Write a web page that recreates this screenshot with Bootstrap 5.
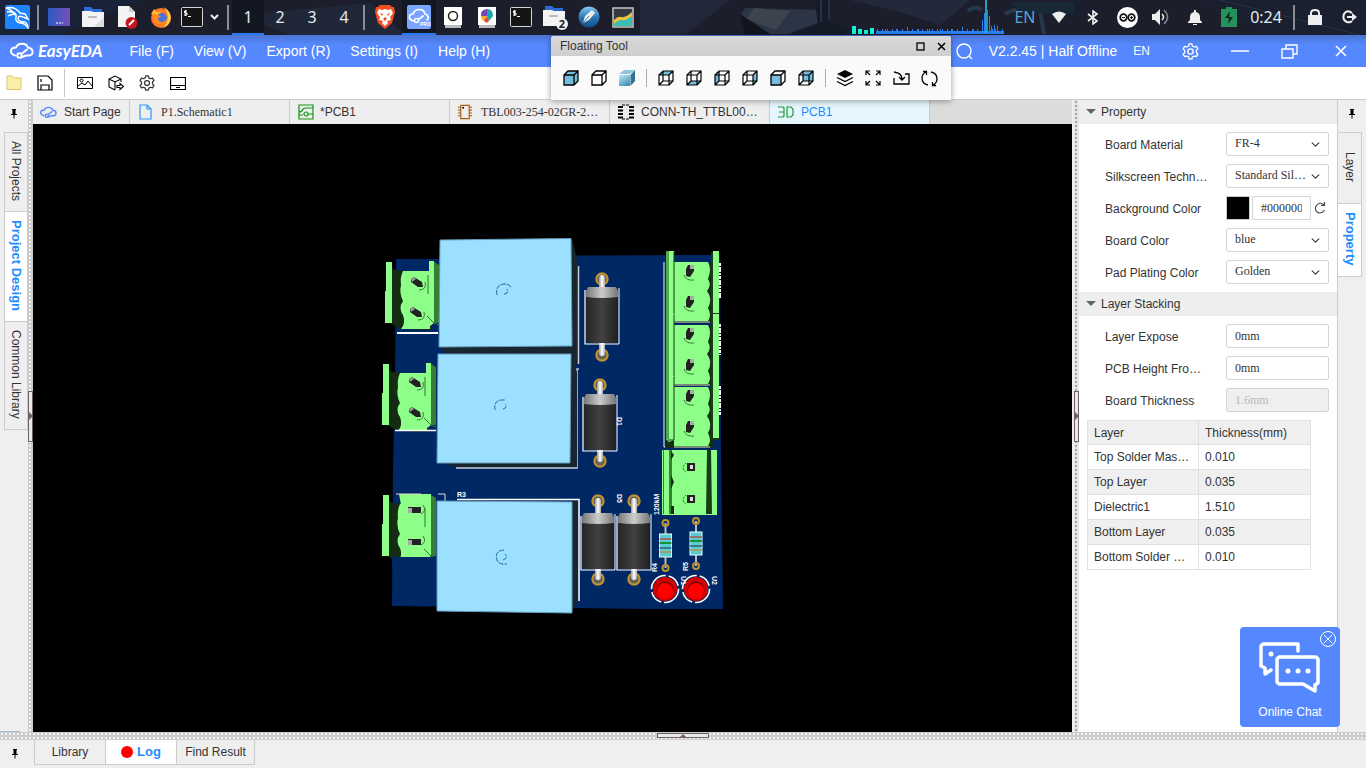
<!DOCTYPE html>
<html lang="en">
<head>
<meta charset="utf-8">
<meta name="viewport" content="width=device-width, initial-scale=1">
<title>EasyEDA</title>
<link href="https://cdn.jsdelivr.net/npm/bootstrap@5.3.0/dist/css/bootstrap.min.css" rel="stylesheet">
<script src="https://cdn.jsdelivr.net/npm/bootstrap@5.3.0/dist/js/bootstrap.bundle.min.js"></script>
<style>
  body { font-family: "Liberation Sans", Arial, sans-serif; font-size: 12px; line-height: 16px; color: #333; background: #efefef; }
  svg { display: block; flex: none; }
  button { border: 0; background: none; padding: 0; color: inherit; font: inherit; }
  a { color: inherit; text-decoration: none; }

  /* desktop panel */
  .desk { height: 35px; background: #1c1f2b; color: #e4ebee; font-family: "Noto Sans", sans-serif; font-size: 16px; line-height: 22px; }
  .desk-art { inset: 0; width: 100%; height: 100%; }
  .cell { width: 34px; height: 35px; display: flex; align-items: center; justify-content: center; flex: none; padding-bottom: 1px; }
  .cell-ws { width: 32px; }
  .cell-on { background: #131722; box-shadow: inset 0 -2px #2779ef; }
  .cell-bar { width: 8px; flex: none; height: 25px; background: linear-gradient(#8b8d92, #8b8d92) center / 2px 100% no-repeat; }
  .cell-term { width: 27px; }
  .cell-chev { width: 19px; }
  .clock { width: 44px; padding: 0 4px 2px 0; }
  .lang { color: #55a3dc; }

  /* application title bar */
  .titlebar { height: 32px; background: linear-gradient(#4c74d2, #5588ff 10px); color: #fff; font-size: 14px; }
  .brand { padding-left: 10px; gap: 2px; }
  .brand-name { font: italic 700 17px/20px Lato, sans-serif; }
  .menus { gap: 20px; margin-left: 27px; }
  .lang-sm { font-size: 12px; }
  .win-close { margin: 0 16px 0 10px; }

  .toolbar { height: 33px; background: #fff; border-bottom: 1px solid #ccc; padding-left: 6px; }
  .toolbar button { margin-right: 15px; }
  .rule-main { width: 1px; height: 28px; background: #c4c4c4; margin: 0 12px 0 -4px; }

  /* floating window */
  .floater { left: calc(50% - 132px); top: 1px; width: 400px; background: #fafafa; box-shadow: 0 1px 6px #0006; border-radius: 3px 3px 0 0; z-index: 5; font-size: 12px; color: #333; }
  .floater-head { height: 20px; background: linear-gradient(#d9d9d9, #cecece); padding: 0 5px 0 9px; border-radius: 3px 3px 0 0; }
  .floater-body { height: 44px; padding-left: 6px; }
  .tool { width: 28px; height: 28px; display: flex; align-items: center; justify-content: center; }
  .tool-rule { width: 11px; height: 18px; background: linear-gradient(#aaa, #aaa) center / 1px 100% no-repeat; }

  /* side rails */
  .rail { width: 28px; background: #efefef; }
  .rail-end { width: 29px; border-left: 1px solid #ccc; }
  .pin { height: 32px; padding-top: 9px; }
  .vtab { writing-mode: vertical-rl; border: 1px solid #ccc; padding: 8px 2px 10px; width: 24px; margin-top: -1px; }
  .rail-start .vtab { margin-left: 4px; }
  .rail-end .vtab { border-left: 0; padding: 19px 2px 21px; }
  .rail-end .vtab-on { padding: 8px 2px 10px; }
  .vtab-on { background: #fff; color: #1e8cff; font-weight: 700; font-size: 13px; }
  .rail-mark { width: 20px; height: 1px; background: #9bbbe0; }

  .split { display: flex; align-items: center; justify-content: center; background: linear-gradient(#f2f2f2, #f2f2f2) 2px 2px / 1px 1px, #ccc; }
  .split-v { width: 5px; background: radial-gradient(circle at 2px 2px, #f4f4f4 0 .8px, transparent 1px) 0 0 / 5px 4px #cbcbcb; }
  .split-end { width: 7px; border-left: 2px solid #eee; background: radial-gradient(circle at 2px 2px, #a5a5a5 0 .8px, transparent 1px) 0 0 / 5px 4px #e6e6e6; }
  .split-h { height: 7px; background: radial-gradient(circle at 2px 2px, #f4f4f4 0 .8px, transparent 1px) 0 0 / 4px 4px #cbcbcb; }
  .grip { border: 1px solid #6e6064; background: #e9e9e9; color: #6e6064; display: flex; align-items: center; justify-content: center; }
  .grip-v { width: 5px; height: 51px; }
  .grip-h { width: 52px; height: 5px; }

  /* document tabs */
  .tabs { height: 24px; background: #dcdcdc; }
  .doc { width: 160px; padding-left: 7px; gap: 6px; border-right: 1px solid #ccc; background: #eee; }
  .doc-home { width: 97px; gap: 7px; }
  .doc-on { background: #e6f6ff; color: #1e8cff; }
  .serif { font-family: "Liberation Serif", "Times New Roman", serif; }
  .doc.serif { gap: 8px; }
  .stage { background: #000; min-height: 0; }

  /* property panel */
  .props { width: 258px; background: #fff; }
  .props-head { height: 24px; background: #eee; padding-left: 7px; gap: 4px; }
  .props-rows { padding: 4px 8px 4px 26px; }
  .prop { height: 32px; }
  .prop label { width: 121px; padding-top: 1px; }
  .ctl { width: 103px; height: 24px; padding: 0 8px; border: 1px solid #d4d4d4; border-radius: 2px; font: 12px/20px "Liberation Serif", serif; color: #333; background-color: #fff; }
  select.ctl { background-position: right 8px center; background-size: 9px 9px; padding: 0 20px 2px 8px; }
  .ctl:disabled { background: #efefef; color: #b8b8b8; }
  .ctl-hex { width: 59px; margin: 0 3px 0 2px; }
  .swatch { width: 24px; height: 24px; padding: 0; background: #000; border: 1px solid #ccc; }
  .layers { width: 224px; margin: 0 0 0 8px; border-collapse: collapse; color: #333; }
  .layers th, .layers td { border: 1px solid #e0e0e0; height: 25px; padding: 0 6px; font-weight: 400; }
  .layers th { height: 24px; }
  .layers th:first-child { width: 111px; }
  .layers th, .layers tr:nth-child(even) td { background: #efefef; }

  /* bottom dock */
  .dock { height: 29px; border-top: 1px solid #d0d0d0; }
  .dock-pin { width: 34px; padding: 9px 0 0 11px; }
  .dtab { height: 25px; border: 1px solid #ccc; border-top: 0; width: 72px; margin-right: -1px; gap: 4px; }
  .dtab-wide { width: 79px; }
  .dtab-on { background: #fff; color: #1e8cff; font-weight: 700; font-size: 13px; }
  .dot { width: 12px; height: 12px; border-radius: 50%; background: #f00; }

  .chat { right: 26px; bottom: 41px; width: 100px; height: 100px; border-radius: 4px; background: #5588ff; color: #fff; z-index: 4; padding-top: 15px; }
  .chat-x { right: 4px; top: 4px; }
  .chat span { margin-top: 10px; }
</style>
</head>
<body class="vh-100 d-flex flex-column overflow-hidden position-relative">

<svg width="0" height="0" class="position-absolute" aria-hidden="true">
  <defs>
    <symbol id="cloud" viewBox="0 0 24 17"><g fill="none" stroke="currentColor" stroke-width="2" stroke-linecap="round" stroke-linejoin="round"><path d="M5 13C-1 11 0 5 6 5C8 0 16 0 18 5C24 6 24 13 19 13H16L11 15"/><path d="M12 11L17 7"/><circle cx="9.500" cy="13" r="2.200"/></g></symbol>
    <symbol id="pin" viewBox="0 0 8 10"><path d="M2 0H6V1H5.500V5H7V6H4.500V9.500H3.500V6H1V5H2.500V1H2Z" fill="#000"/></symbol>
    <symbol id="wire" viewBox="0 0 16 16"><path d="M1 5H11V15H1ZM1 5L5 1H15V11L11 15M11 5L15 1M5 1V11H15M5 11L1 15" fill="none" stroke="#000" stroke-width="1.200"/></symbol>
    <symbol id="solid" viewBox="0 0 16 16"><path d="M1 5L5 1H15V11L11 15H1ZM1 5H11V15M11 5L15 1" stroke="#000" stroke-width="1.300"/></symbol>
    <symbol id="cog" viewBox="0 0 18 18"><g fill="none" stroke="currentColor" stroke-width="1.400" stroke-linejoin="round"><path d="M7.500 1H10.500L11 3.200L13 4.200L15.200 3.500L16.800 6.200L15.200 7.800V10.200L16.800 11.800L15.200 14.500L13 13.800L11 14.800L10.500 17H7.500L7 14.800L5 13.800L2.800 14.500L1.200 11.800L2.800 10.200V7.800L1.200 6.200L2.800 3.500L5 4.200L7 3.200Z"/><circle cx="9" cy="9" r="2.800"/></g></symbol>
    <symbol id="term" viewBox="0 0 22 20"><rect x=".5" y=".5" width="21" height="19" rx="1" fill="#151515" stroke="#d5d5d5"/><path d="M6 4H3.500V6H6V8H3M4.700 3V9M7 9.500H10" fill="none" stroke="#fff"/></symbol>
    <symbol id="folder" viewBox="0 0 22 20"><path d="M2 0H9L11 2H20V8H2Z" fill="#2c6bd8"/><path d="M0 4H9L11 5H22V20H0Z" fill="#f3f3f3"/><path d="M22 10V20H12Z" fill="#dedede"/><rect x="6" y="9" width="9" height="2" rx="1" fill="#bbb"/></symbol>

    <linearGradient id="barrel"><stop offset="0" stop-color="#262626"/><stop offset=".5" stop-color="#414141"/><stop offset="1" stop-color="#202020"/></linearGradient>
    <linearGradient id="band"><stop offset="0" stop-color="#777"/><stop offset=".5" stop-color="#ccc"/><stop offset="1" stop-color="#777"/></linearGradient>
    <linearGradient id="lead"><stop offset="0" stop-color="#999"/><stop offset=".5" stop-color="#fff"/><stop offset="1" stop-color="#aaa"/></linearGradient>
    <linearGradient id="cap" x2=".6" y2="1"><stop offset="0" stop-color="#bfe9ff"/><stop offset="1" stop-color="#4594b5"/></linearGradient>
    <linearGradient id="win" x2="1"><stop offset="0" stop-color="#2b5bc4"/><stop offset="1" stop-color="#7b4eb8"/></linearGradient>
    <linearGradient id="blue" x2="0" y2="1"><stop offset="0" stop-color="#88c8f2"/><stop offset=".5" stop-color="#2d7ab7"/><stop offset="1" stop-color="#114c85"/></linearGradient>

    <g id="diode">
      <path d="M-17 3V57H17" fill="none" stroke="#fff" stroke-width="1.200"/><path d="M17 1V57" stroke="#fff"/>
      <path d="M-16 5L-14 1H14L16 5V53L14 56H-14L-16 53Z" fill="url(#barrel)"/>
      <path d="M-16 4L-14 0H14L16 4V10Q0 12-16 10Z" fill="url(#band)"/>
    </g>
    <g id="via"><circle r="5.500" fill="none" stroke="#bd9330" stroke-width="2.400"/><circle r="4" fill="#6d655b"/></g>
    <g id="block">
      <path d="M5 2Q8 11 16 9L20 10H46V69L16 68L5 62Z" fill="#142c12"/>
      <path d="M1 1H7V62H0V30H1Z" fill="#8dff88"/>
      <path d="M18 10H45V68H16Q21 62 18 54Q13 47 18 40Q14 32 16 24Q15 16 18 10Z" fill="#8dff88"/>
      <path d="M44 0H49V62L45 65V44H44Z" fill="#8dff88"/><path d="M49 1L54 4V62H49Z" fill="#377e35"/>
      <path d="M43 14V33M42 55L49 62L54 64" fill="none" stroke="#327330"/>
    </g>
    <g id="hole"><path d="M-6-3L-3-5L5 0L6 5L1 5L-6 0Z" fill="#222"/><path d="M-6-3L-3-5L-1-3L-5 0Z" fill="#999"/><path d="M8 0Q10 8 2 8" fill="none" stroke="#377e35"/></g>
    <g id="blockr">
      <path d="M-1 12H48V72H-1Z" fill="#102f13"/>
      <path d="M8 11H42Q46 18 42 28Q46 34 41 40Q47 48 42 57Q46 64 42 70H8Z" fill="#8dff88"/>
      <path d="M8 71H44" stroke="#dde8dd"/><path d="M0 4L3 0H8V64L3 66L0 63Z" fill="#8dff88"/><path d="M0 0H3V63H0Z" fill="#51a94f"/><path d="M8 1V64H2" fill="none" stroke="#173c17"/>
      <path d="M47 0H53V63H47Z" fill="#8dff88"/><path d="M46 1V63H53" fill="none" stroke="#173c17" stroke-width="2"/>
      <path d="M18 24Q20 30 28 29M18 55Q20 61 28 60" fill="none" stroke="#377e35"/>
      <g id="screws"><path d="M20 18L22 14H28V20L24 26L20 25Z" fill="#222"/><path d="M24 14H28V18H24Z" fill="#aaa"/></g>
      <use href="#screws" y="31"/>
    </g>
    <g id="resistor">
      <path d="M0 0V45" stroke="#bbb" stroke-width="2"/><circle r="3" fill="none" stroke="#bd9330" stroke-width="2"/><circle cy="45" r="3" fill="none" stroke="#bd9330" stroke-width="2"/>
      <rect x="-6" y="11" width="12" height="23" fill="#5bcad2" stroke="#e9ffff"/><path d="M-6 16H6" stroke="#a55" stroke-width="1.500"/><path d="M-6 20H6" stroke="#149434" stroke-width="2"/><path d="M-6 25H6" stroke="#276272" stroke-width="1.500"/><path d="M-6 29H6" stroke="#b99048" stroke-width="1.500"/>
    </g>
    <g id="led"><circle r="13.500" fill="none" stroke="#fff" stroke-width="1.600" stroke-dasharray="22 3 14 3"/><circle r="12" fill="#d20000"/><circle cy="1" r="8.500" fill="#790000"/><circle cy="2" r="8" fill="#f00"/></g>
  </defs>
</svg>

<header class="desk d-flex align-items-center position-relative">
  <svg class="desk-art position-absolute" viewBox="0 0 1366 35" preserveAspectRatio="none" aria-hidden="true">
    <path d="M0 0H140L60 35H0Z" fill="#182239"/><path d="M240 15L370 3L405 35H290Z" fill="#202739"/>
    <path d="M640 0H730L685 35H640Z" fill="#22283a"/><path d="M745 8L822 10L830 18L788 34H765L740 16Z" fill="#2b3546"/><path d="M754 8L790 11L776 30L746 19Z" fill="#3d4450"/><path d="M740 14L770 34H745Z" fill="#12151e"/>
    <path d="M815 0H829L830 22L851 29L843 35H790L818 25Z" fill="#141b26"/><path d="M821 0V22M829 0V20" stroke="#334766"/>
    <path d="M850 0H970L940 25L900 12Z" fill="#22293a"/><path d="M968 11Q975 5 982 10M1005 14Q1020 5 1040 10L1044 34" fill="none" stroke="#26394c" stroke-width="4"/><path d="M1010 2H1075V14H1020Z" fill="#182837"/>
    <path d="M1200 0H1366V35H1275Z" fill="#1a2030"/><path d="M1220 0L1360 35" stroke="#263345"/>
  </svg>
  <div class="d-flex align-items-center position-relative w-100">
    <button class="cell" aria-label="Applications"><svg width="25" height="24" viewBox="0 0 25 24"><rect width="25" height="24" rx="2" fill="#1f82ff"/><path d="M1 3Q10 1 15 8L20 9L23 14L18 12Q14 10 13 13Q13 17 20 17Q23 19 23 23Q20 18 15 18Q10 17 11 12Q12 9 8 7Q5 4 1 3M2 7Q7 6 11 9M3 11Q8 8 11 10" fill="none" stroke="#fff" stroke-width="1.400"/></svg></button>
    <span class="cell-bar"></span>
    <button class="cell" aria-label="Desktop"><svg width="22" height="18" viewBox="0 0 22 18"><rect width="22" height="18" rx="1" fill="url(#win)"/><path d="M8 15H10M11 15H13M14 15H15" stroke="#fff"/></svg></button>
    <button class="cell" aria-label="Files"><svg width="22" height="20"><use href="#folder"/></svg></button>
    <button class="cell" aria-label="Editor"><svg width="22" height="23" viewBox="0 0 22 23"><path d="M2 0H13L19 6V21H2Z" fill="#f4f4f4"/><path d="M13 0V6H19Z" fill="#ccc"/><circle cx="15.500" cy="17" r="6" fill="#c5161d"/><path d="M13 19L18 14" stroke="#fff" stroke-width="2"/></svg></button>
    <button class="cell" aria-label="Firefox"><svg width="22" height="22" viewBox="0 0 22 22"><circle cx="11" cy="12" r="10" fill="#ff7626"/><path d="M14 1Q23 7 20 15Q18 20 13 22Q22 12 14 1" fill="#ffd43d"/><path d="M1 8L4 3L7 6L12 5L8 9Z" fill="#ffb52d"/><circle cx="12" cy="12" r="5" fill="#4d72d9"/><path d="M2 9Q9 8 11 11Q6 11 9 15Q13 18 17 13Q16 20 9 19Q3 17 2 9Z" fill="#ff8c1c"/></svg></button>
    <button class="cell cell-term" aria-label="Terminal"><svg width="22" height="20"><use href="#term"/></svg></button>
    <button class="cell cell-chev" aria-label="More"><svg width="9" height="6" viewBox="0 0 9 6"><path d="M1 1L4.500 4.500L8 1" fill="none" stroke="#eee" stroke-width="2"/></svg></button>
    <span class="cell-bar"></span>
    <button class="cell cell-ws cell-on">1</button><button class="cell cell-ws">2</button><button class="cell cell-ws">3</button><button class="cell cell-ws">4</button>
    <span class="cell-bar"></span>
    <button class="cell" aria-label="Brave"><svg width="20" height="24" viewBox="0 0 20 24"><path d="M5 0H15L17 2H19L20 7L17 18L10 24L3 18L0 7L1 2H3Z" fill="#f34f22"/><path d="M4 4L7 5L10 4L13 5L16 4L18 8L15 12L16 15L12 16L13 18L10 21L7 18L8 16L4 15L5 12L2 8Z" fill="#fff"/><path d="M5 8L8 9L7 11ZM15 8L12 9L13 11ZM8 14L10 12L12 14L10 16Z" fill="#f34f22"/></svg></button>
    <button class="cell cell-on" aria-label="EasyEDA Pro"><svg width="24" height="24" viewBox="0 0 24 24"><rect width="24" height="24" rx="2" fill="#79a4ff"/><path d="M7 16C1 15 1 9 6 9C8 3 17 3 18 9C22 10 22 14 20 15M12 14L16 11" fill="none" stroke="#fff" stroke-width="1.700" stroke-linecap="round"/><circle cx="9.500" cy="15.500" r="2" fill="none" stroke="#fff" stroke-width="1.500"/><text x="13" y="21" font-family="Liberation Sans" font-size="5" font-weight="700" fill="#fff">PRO</text></svg></button>
    <button class="cell" aria-label="Viewer"><svg width="18" height="21" viewBox="0 0 18 21"><path d="M0 0H18V18H0Z" fill="#fff"/><path d="M1 18H17V21H1Z" fill="#bbb"/><circle cx="9" cy="9" r="4.500" fill="#fff" stroke="#222" stroke-width="1.500"/></svg></button>
    <button class="cell" aria-label="Charts"><svg width="18" height="21" viewBox="0 0 18 21"><path d="M0 0H18V18H0Z" fill="#fff"/><path d="M1 18H17V21H1Z" fill="#bbb"/><path d="M9 9V2Q2 3 3 9Z" fill="#7b45b5"/><path d="M9 9H3Q3 13 6 14Z" fill="#f0b429"/><path d="M9 9L6 14Q9 17 11 14Z" fill="#e84532"/><path d="M9 9L9 2Q15 2 15 9L11 14Z" fill="#19a3ad"/></svg></button>
    <button class="cell" aria-label="Terminal window"><svg width="22" height="20"><use href="#term"/></svg></button>
    <button class="cell" aria-label="File windows"><svg width="26" height="25" viewBox="0 0 26 25"><use href="#folder" x="1" y="1" width="22" height="20"/><circle cx="20" cy="19" r="6" fill="#f2f2f2"/><text x="20" y="23" text-anchor="middle" font-family="Noto Sans" font-size="11" font-weight="700" fill="#222">2</text></svg></button>
    <button class="cell" aria-label="Pen"><svg width="22" height="22" viewBox="0 0 22 22"><circle cx="11" cy="11" r="10.500" fill="url(#blue)"/><path d="M5 17L7 10L14 4L17 7L11 14Z" fill="#ececec"/><path d="M5 17L11 10" stroke="#58758b"/></svg></button>
    <button class="cell" aria-label="System monitor"><svg width="22" height="21" viewBox="0 0 22 21"><rect x="1" y="1" width="20" height="19" fill="#343b45" stroke="#c6c6bf" stroke-width="1.500"/><path d="M2 15Q6 10 9 11Q14 12 20 6V19H2Z" fill="#38bdb4"/><path d="M2 13Q6 9 9 10Q14 11 20 5V9Q14 14 9 13Q6 13 2 17Z" fill="#f0c53b"/></svg></button>

    <svg id="load" class="ms-auto me-1" width="152" height="35" viewBox="0 0 152 35" role="img" aria-label="Load graph"><path d="M0 26H4V34H0ZM6 29H10V34H6ZM12 30H16V34H12ZM18 28H22V34H18Z" fill="#19f0d8"/><path id="loadbars" stroke="#2880f2" fill="none"/><path d="M134 0V33" stroke="#22cde8" stroke-width="1.500"/></svg>
    <button class="cell lang">EN</button>
    <button class="cell" aria-label="Wi-Fi"><svg width="14" height="12" viewBox="0 0 14 12"><path d="M0 3Q7-2 14 3L7 12Z" fill="#eee"/></svg></button>
    <button class="cell" aria-label="Bluetooth"><svg width="12" height="15" viewBox="0 0 12 15"><path d="M1 4L10 11L6 14V1L10 4L1 11" fill="none" stroke="#eee" stroke-width="1.600"/></svg></button>
    <button class="cell" aria-label="Arduino"><svg width="21" height="21" viewBox="0 0 21 21"><circle cx="10.500" cy="10.500" r="10.500" fill="#fff"/><g fill="none" stroke="#111" stroke-width="1.700"><circle cx="6.500" cy="10.500" r="3.300"/><circle cx="14.500" cy="10.500" r="3.300"/></g><path d="M5 10.500H8M13 10.500H16M14.500 9V12" stroke="#111"/></svg></button>
    <button class="cell" aria-label="Volume"><svg width="18" height="16" viewBox="0 0 18 16"><path d="M0 5H3L8 0V16L3 11H0Z" fill="#eee"/><path d="M10 5Q13 8 10 11" fill="none" stroke="#eee" stroke-width="1.500"/><path d="M12 1Q19 8 12 15" fill="none" stroke="#81858d" stroke-width="1.500"/></svg></button>
    <button class="cell" aria-label="Notifications"><svg width="14" height="15" viewBox="0 0 14 15"><path d="M6 0H8V2Q12 3 12 7V10L14 12V13H0V12L2 10V7Q2 3 6 2ZM5 14H9V15H5Z" fill="#eee"/></svg></button>
    <button class="cell" aria-label="Battery"><svg width="16" height="20" viewBox="0 0 16 20"><path d="M5 0H11V2H16V20H0V2H5Z" fill="#24915c"/><path d="M9 4L4 11H8L7 17L12 10H8Z" fill="#10261c"/></svg></button>
    <span class="cell clock">0:24</span>
    <span class="cell-bar"></span>
    <button class="cell" aria-label="Lock"><svg width="14" height="16" viewBox="0 0 14 16"><path d="M0 6H14V16H0Z" fill="#eee"/><path d="M3 7V4Q3 1 7 1Q11 1 11 4V7" fill="none" stroke="#eee" stroke-width="2"/></svg></button>
    <button class="cell" aria-label="Log out"><svg width="15" height="14" viewBox="0 0 15 14"><path d="M10 3Q5-1 2 4Q0 10 5 12Q8 13 10 11" fill="none" stroke="#eee" stroke-width="2"/><path d="M5 6H10V3L15 7L10 11V8H5Z" fill="#eee"/></svg></button>
  </div>
</header>

<nav class="titlebar d-flex align-items-center position-relative" aria-label="Main menu">
  <a href="#" class="brand d-flex align-items-center"><svg width="26" height="19"><use href="#cloud" width="24" height="18"/></svg><span class="brand-name">EasyEDA</span></a>
  <div class="menus d-flex">
    <button>File (F)</button><button>View (V)</button><button>Export (R)</button><button>Settings (I)</button><button>Help (H)</button>
  </div>
  <div class="ms-auto d-flex align-items-center">
    <button aria-label="Search" class="me-3"><svg width="17" height="17" viewBox="0 0 17 17"><circle cx="8" cy="8" r="7" fill="none" stroke="#fff" stroke-width="1.400"/><path d="M13 13L16 16" stroke="#fff" stroke-width="1.400"/></svg></button>
    <span>V2.2.45 | Half Offline</span>
    <button class="lang-sm ms-3 me-4">EN</button>
    <button aria-label="Settings" class="ms-2 me-4"><svg width="17" height="17"><use href="#cog"/></svg></button>
    <button aria-label="Minimize" class="ms-2 me-4"><svg width="18" height="16" viewBox="0 0 18 16"><path d="M0 8H18" stroke="#fff" stroke-width="1.500"/></svg></button>
    <button aria-label="Restore" class="ms-2 me-4"><svg width="17" height="15" viewBox="0 0 17 15"><path d="M1 5H12V14H1ZM5 5V1H16V10H12" fill="none" stroke="#fff" stroke-width="1.400"/></svg></button>
    <button aria-label="Close" class="win-close"><svg width="18" height="12" viewBox="0 0 18 12"><path d="M4 1L14 11M14 1L4 11" stroke="#fff" stroke-width="1.600"/></svg></button>
  </div>

  <section class="floater position-absolute" aria-label="Floating Tool">
    <div class="floater-head d-flex align-items-center"><span class="me-auto">Floating Tool</span>
      <button aria-label="Maximize" class="me-2 pe-1"><svg width="9" height="9"><rect x="1" y="1" width="7" height="7" fill="none" stroke="#000" stroke-width="1.300"/></svg></button>
      <button aria-label="Close tool"><svg width="9" height="9"><path d="M1 1L8 8M8 1L1 8" stroke="#000" stroke-width="1.500"/></svg></button>
    </div>
    <div class="floater-body d-flex align-items-center">
      <button class="tool" aria-label="Shaded with edges"><svg width="16" height="16" fill="#74bddd"><use href="#solid"/></svg></button>
      <button class="tool" aria-label="Outline"><svg width="16" height="16" fill="#fff"><use href="#solid"/></svg></button>
      <button class="tool" aria-label="Shaded"><svg width="16" height="16" viewBox="0 0 16 16"><path d="M0 4L5 0H16L11 4Z" fill="#8fc5df"/><path d="M0 5H11V16H0Z" fill="url(#cap)"/><path d="M11.500 5L16 0V11L11.500 16Z" fill="#32718f"/></svg></button>
      <span class="tool-rule"></span>
      <button class="tool" aria-label="Top"><svg width="16" height="16" viewBox="0 0 16 16"><path d="M1 5L5 1H15L11 5Z" fill="#74bddd"/><use href="#wire"/></svg></button>
      <button class="tool" aria-label="Bottom"><svg width="16" height="16" viewBox="0 0 16 16"><path d="M1 15L5 11H15L11 15Z" fill="#74bddd"/><use href="#wire"/></svg></button>
      <button class="tool" aria-label="Left"><svg width="16" height="16" viewBox="0 0 16 16"><path d="M1 5L5 1V11L1 15Z" fill="#74bddd"/><use href="#wire"/></svg></button>
      <button class="tool" aria-label="Right"><svg width="16" height="16" viewBox="0 0 16 16"><path d="M11 5L15 1V11L11 15Z" fill="#74bddd"/><use href="#wire"/></svg></button>
      <button class="tool" aria-label="Front"><svg width="16" height="16" viewBox="0 0 16 16"><path d="M1 5L5 1H15V11L11 15M11 5L15 1" fill="none" stroke="#000" stroke-width="1.300"/><path d="M1 5H11V15H1Z" fill="#74bddd" stroke="#000" stroke-width="1.300"/></svg></button>
      <button class="tool" aria-label="Back"><svg width="16" height="16" viewBox="0 0 16 16"><path d="M5 1H15V11H5Z" fill="#74bddd"/><use href="#wire"/></svg></button>
      <span class="tool-rule"></span>
      <button class="tool" aria-label="Layers"><svg width="18" height="18" viewBox="0 0 18 18"><path d="M1 5L9 1L17 5L9 9Z"/><path d="M1 8.500L9 12.500L17 8.500M1 12.500L9 16.500L17 12.500" fill="none" stroke="#000" stroke-width="1.300"/></svg></button>
      <button class="tool" aria-label="Fit"><svg width="16" height="16" viewBox="0 0 16 16"><path d="M1 5V1H5M1 1L5 5M11 1H15V5M15 1L11 5M1 11V15H5M1 15L5 11M11 15H15V11M15 15L11 11" fill="none" stroke="#000" stroke-width="1.200"/></svg></button>
      <button class="tool" aria-label="Import"><svg width="17" height="16" viewBox="0 0 17 16"><path d="M1 8V14H16V4H12M1 2Q9 3 9 9M6 7L9 10L12 7" fill="none" stroke="#000" stroke-width="1.300"/></svg></button>
      <button class="tool" aria-label="Refresh"><svg width="17" height="17" viewBox="0 0 17 17"><path d="M7 15Q1 14 1 8Q1 4 5 2M2 1.500H5.500V5M10 2Q16 3 16 9Q16 13 12 15M15 15.500H11.500V12" fill="none" stroke="#000" stroke-width="1.300"/></svg></button>
    </div>
  </section>
</nav>

<div class="toolbar d-flex align-items-center">
  <button aria-label="Open"><svg width="16" height="16" viewBox="0 0 16 16"><path d="M1 3V14.500H15V3H8L6 1H1Z" fill="#fbefa8" stroke="#d9c66a"/></svg></button>
  <button aria-label="Save"><svg width="16" height="16" viewBox="0 0 16 16"><path d="M1 1H11L15 5V15H1ZM4 15V10H12V15M4 4V7" fill="none" stroke="#000" stroke-width="1.200"/></svg></button>
  <span class="rule-main"></span>
  <button aria-label="Image"><svg width="16" height="16" viewBox="0 0 16 16"><path d="M.5 2.500H15.500V13.500H.5ZM1 11L5 8L8 10L11 6L15 11" fill="none" stroke="#000"/><circle cx="4.500" cy="5.500" r="1.500" fill="none" stroke="#000"/></svg></button>
  <button aria-label="Export model"><svg width="16" height="16" viewBox="0 0 16 16"><path d="M7 15L1 12V4L7 1L13 4V7M1 4L7 7L13 4M7 7V15M9 10.500H12V8.500L15.500 11.500L12 14.500V12.500H9Z" fill="none" stroke="#000" stroke-width="1.100"/></svg></button>
  <button aria-label="Preferences"><svg width="16" height="16"><use href="#cog"/></svg></button>
  <button aria-label="Bottom panel"><svg width="16" height="16" viewBox="0 0 16 16"><path d="M.5 2.500H15.500V14.500H.5ZM.5 10.500H15.500M6 12.500H10" fill="none" stroke="#000" stroke-width="1.200"/></svg></button>
</div>

<main class="d-flex flex-grow-1" style="min-height:0">
  <aside class="rail rail-start d-flex flex-column">
    <button class="pin d-flex justify-content-center align-items-start" aria-label="Pin left panel"><svg width="8" height="10"><use href="#pin"/></svg></button>
    <button class="vtab mt-0">All Projects</button><button class="vtab vtab-on">Project Design</button><button class="vtab">Common Library</button>
    <span class="rail-mark mt-auto"></span>
  </aside>
  <div class="split split-v"><span class="grip grip-v"><svg width="4" height="8"><path d="M0 0L4 4L0 8Z" fill="currentColor"/></svg></span></div>

  <section class="flex-grow-1 d-flex flex-column" style="min-width:0">
    <div class="tabs d-flex">
      <button class="doc doc-home d-flex align-items-center"><svg width="17" height="13" color="#5588ff"><use href="#cloud"/></svg>Start Page</button>
      <button class="doc serif d-flex align-items-center"><svg width="16" height="16" viewBox="0 0 16 16"><path d="M3 1H10L14 5V15H3ZM10 1V5H14" fill="none" stroke="#2f95ff" stroke-width="1.200"/></svg>P1.Schematic1</button>
      <button class="doc d-flex align-items-center ps-2"><svg width="16" height="16" viewBox="0 0 16 16"><path d="M1 1H15V15H1ZM1 8Q4 8 5 5Q6 4 9 4H15M1 11H5M10 10H15" fill="none" stroke="#159615" stroke-width="1.200"/><circle cx="8" cy="10" r="2" fill="none" stroke="#159615" stroke-width="1.200"/></svg>*PCB1</button>
      <button class="doc serif d-flex align-items-center"><svg width="16" height="16" viewBox="0 0 17 16"><path d="M4 1H13V15H4ZM1 3H4M1 6H4M1 9H4M1 12H4M13 3H16M13 6H16M13 9H16M13 12H16" fill="none" stroke="#a65d13" stroke-width="1.200"/><circle cx="6.500" cy="3.500" r="1"/></svg>TBL003-254-02GR-2…</button>
      <button class="doc d-flex align-items-center"><svg width="18" height="16" viewBox="0 0 18 16"><path d="M1 3H6M1 6.500H6M1 10H6M1 13.500H6M12 3H17M12 6.500H17M12 10H17M12 13.500H17" stroke="#000" stroke-width="2"/><path d="M5 1H13M5 15H13" stroke="#000" stroke-dasharray="3 1"/></svg>CONN-TH_TTBL00…</button>
      <button class="doc doc-on d-flex align-items-center"><svg width="18" height="14" viewBox="0 0 18 14"><path d="M1 2H6L7 3V11L6 12H1M2 7H7M10 2H14L16 4V10L14 12H10Z" fill="none" stroke="#169c31" stroke-width="1.200"/></svg>PCB1</button>
    </div>
    <div class="stage flex-grow-1">
      <svg width="100%" height="100%" viewBox="33 124 1039 608" role="img" aria-label="3D view of the relay board">
        <path d="M396 259H440V256L720 255L721 450L723 609H650L392 606L393 468L395 380Z" fill="#002864"/>
        <use href="#block" x="385" y="261"/><path d="M397 333H438" stroke="#fff" stroke-width="2"/>
        <use href="#block" x="382" y="363"/><path d="M395 430.500H436" stroke="#fff" stroke-width="1.500"/>
        <use href="#block" x="382" y="494"/><path d="M399 494H428V505H401Z" fill="#8dff88"/><path d="M392 557H436V566H392Z" fill="#002864"/><path d="M396 494H421M438 494H445V501" fill="none" stroke="#ddd"/>
        <use href="#hole" x="417" y="282"/><use href="#hole" x="416" y="312"/><use href="#hole" x="415" y="382"/><use href="#hole" x="415" y="412"/>
        <g fill="#222"><path d="M408 507H421V513H408ZM408 539H421V545H408Z"/></g><path d="M408 508H412V513H408ZM408 540H412V545H408Z" fill="#aaa"/><path d="M423 505Q427 511 421 514M423 536Q427 542 421 545" fill="none" stroke="#377e35"/>

        <path d="M572 239L578 263V365H456L439 346Z" fill="#19262f"/><path d="M578.500 266V364M579 369H577V468H456" fill="none" stroke="#c7ccd5" stroke-width="1.500"/>
        <path d="M570 355L577 372V467H456L437 462Z" fill="#19262f"/>
        <path d="M457 499.500H579V601" fill="none" stroke="#fff" stroke-width="1.500"/><path d="M572 501H578V600L572 611Z" fill="#19262f"/>
        <g fill="#9be1ff" stroke="#679bbc" stroke-linejoin="round"><path d="M440 240L571 238.500L572 346L439 347Z"/><path d="M438 354H571L570 463L437 463Z"/><path d="M437 501L572 502V613L437 611Z"/></g>
        <g fill="none" stroke="#246c89" stroke-dasharray="5 1"><path d="M497 295Q495 285 504 284Q510 284 511 288M504 294Q509 294 507 289M495 410Q493 399 505 400M503 409Q508 408 505 404M504 550Q494 551 497 560Q499 565 507 564M503 560Q509 558 505 554"/></g>

        <g><use href="#via" x="602" y="279"/><use href="#via" x="602" y="355"/><use href="#via" x="600" y="385"/><use href="#via" x="600" y="461"/><use href="#via" x="598" y="501"/><use href="#via" x="598" y="579"/><use href="#via" x="634" y="501"/><use href="#via" x="634" y="579"/></g>
        <g fill="url(#lead)"><rect x="599" y="275" width="6" height="81" rx="3"/><rect x="597" y="381" width="6" height="81" rx="3"/><rect x="595" y="498" width="6" height="82" rx="3"/><rect x="631" y="498" width="6" height="82" rx="3"/></g>
        <use href="#diode" x="602" y="287"/><use href="#diode" x="600" y="394"/><use href="#diode" x="598" y="513"/><use href="#diode" x="634" y="513"/>

        <path d="M664 262V447H714M663 452V515" fill="none" stroke="#fff"/>
        <use href="#blockr" x="666" y="251"/><use href="#blockr" x="666" y="314"/><use href="#blockr" x="666" y="376"/>
        <path d="M662 450H717V515H662Z" fill="#8dff88"/><path d="M663 450H672V514H663Z" fill="#368336"/><path d="M664 450H669V514H664Z" fill="#8dff88"/><path d="M671 451L674 455L671 460ZM671 475L674 482L671 489ZM671 506H674V514H671Z" fill="#142c12"/><path d="M707 450H711L712 514H706Z" fill="#173c17"/>
        <g fill="#222"><path d="M687 463H695V471H687ZM687 495H695V503H687Z"/></g><path d="M690 465H693V469H690ZM690 497H693V501H690Z" fill="#ddd"/><path d="M686 463Q680 468 686 472M686 495Q680 500 686 504" fill="none" stroke="#377e35" stroke-dasharray="2 1"/>
        <g stroke="#fff" stroke-width="2" stroke-dasharray="3 1 5 1 2 1"><path d="M720 263V298M720 324V355M720 386V416"/></g>
        <use href="#resistor" x="665.500" y="523"/><use href="#resistor" x="696" y="521"/>
        <use href="#led" x="665" y="589"/><use href="#led" x="696" y="589"/>
        <g fill="#fff" font-family="Liberation Sans" font-weight="700" font-size="7">
          <text x="457" y="497">R3</text>
          <text transform="translate(617 494) rotate(90)">D5</text><text transform="translate(617 417) rotate(90)">D1</text>
          <text transform="translate(659 515) rotate(-90)">120kM</text>
          <text transform="translate(657 572) rotate(-90)">R4</text><text transform="translate(688 571) rotate(-90)">R5</text>
          <text transform="translate(681 576) rotate(90)">U1</text><text transform="translate(712 576) rotate(90)">U2</text>
        </g>
      </svg>
    </div>
  </section>

  <div class="split split-end"><span class="grip grip-v"><svg width="4" height="8"><path d="M0 0L4 4L0 8Z" fill="currentColor"/></svg></span></div>
  <aside class="props">
    <button class="props-head d-flex align-items-center w-100"><svg width="11" height="6"><path d="M0 0H10L5 5Z" fill="#666"/></svg>Property</button>
    <div class="props-rows">
      <div class="prop d-flex align-items-center"><label for="mat">Board Material</label><select id="mat" class="form-select ctl"><option>FR-4</option></select></div>
      <div class="prop d-flex align-items-center"><label for="silk">Silkscreen Techn…</label><select id="silk" class="form-select ctl"><option>Standard Sil…</option></select></div>
      <div class="prop d-flex align-items-center"><label for="bg">Background Color</label><button class="swatch" aria-label="Pick color"></button><input id="bg" class="ctl ctl-hex" value="#000000"><button aria-label="Reset color"><svg width="12" height="12" viewBox="0 0 12 12"><path d="M10 3Q6-1 2 4Q0 9 5 11Q9 11 10.500 8M10.500 0V3.500H7" fill="none" stroke="#444" stroke-width="1.100"/></svg></button></div>
      <div class="prop d-flex align-items-center"><label for="bc">Board Color</label><select id="bc" class="form-select ctl"><option>blue</option></select></div>
      <div class="prop d-flex align-items-center"><label for="pad">Pad Plating Color</label><select id="pad" class="form-select ctl"><option>Golden</option></select></div>
    </div>
    <button class="props-head d-flex align-items-center w-100"><svg width="11" height="6"><path d="M0 0H10L5 5Z" fill="#666"/></svg>Layer Stacking</button>
    <div class="props-rows">
      <div class="prop d-flex align-items-center"><label for="exp">Layer Expose</label><input id="exp" class="ctl" value="0mm"></div>
      <div class="prop d-flex align-items-center"><label for="hgt">PCB Height Fro…</label><input id="hgt" class="ctl" value="0mm"></div>
      <div class="prop d-flex align-items-center"><label for="thk">Board Thickness</label><input id="thk" class="ctl" value="1.6mm" disabled></div>
    </div>
    <table class="layers">
      <thead><tr><th>Layer</th><th>Thickness(mm)</th></tr></thead>
      <tbody>
        <tr><td>Top Solder Mas…</td><td>0.010</td></tr>
        <tr><td>Top Layer</td><td>0.035</td></tr>
        <tr><td>Dielectric1</td><td>1.510</td></tr>
        <tr><td>Bottom Layer</td><td>0.035</td></tr>
        <tr><td>Bottom Solder …</td><td>0.010</td></tr>
      </tbody>
    </table>
  </aside>
  <aside class="rail rail-end d-flex flex-column">
    <button class="pin d-flex justify-content-center align-items-start" aria-label="Pin right panel"><svg width="8" height="10"><use href="#pin"/></svg></button>
    <button class="vtab mt-0">Layer</button><button class="vtab vtab-on">Property</button>
  </aside>
</main>

<div class="split split-h"><span class="grip grip-h"><svg width="8" height="4"><path d="M0 4L4 0L8 4Z" fill="currentColor"/></svg></span></div>
<footer class="dock d-flex">
  <button class="dock-pin d-flex align-items-start" aria-label="Pin bottom panel"><svg width="8" height="10"><use href="#pin"/></svg></button>
  <button class="dtab">Library</button>
  <button class="dtab dtab-on d-flex align-items-center justify-content-center"><span class="dot"></span>Log</button>
  <button class="dtab dtab-wide">Find Result</button>
</footer>

<aside class="chat position-absolute d-flex flex-column align-items-center">
  <button class="chat-x position-absolute" aria-label="Close chat"><svg width="16" height="16"><circle cx="8" cy="8" r="7.500" fill="none" stroke="#fff"/><path d="M4 4L12 12M12 4L4 12" stroke="#fff"/></svg></button>
  <svg width="62" height="52" viewBox="0 0 62 52"><g fill="none" stroke="#fff" stroke-width="3.500" stroke-linecap="round" stroke-linejoin="round"><path d="M39 9V2H4L2 4V24L6 26V32L12 28"/><path d="M20 15H57L59 17V41L56 43V49L44 42H20L18 40V17Z"/></g><g fill="#fff"><circle cx="12" cy="12" r="2.500"/><circle cx="29" cy="29" r="2.500"/><circle cx="39" cy="29" r="2.500"/><circle cx="49" cy="29" r="2.500"/></g></svg>
  <span>Online Chat</span>
</aside>

<script>
  // Load history: low noise with one recent spike
  var d = '', spikes = { 130: 14, 132: 21, 135: 24, 137: 18, 139: 8, 142: 9, 145: 8 };
  for (var x = 24; x < 152; x++) {
    var h = spikes[x] || (3 + (x * 7 % 5 === 0 ? 2 : 0) + (x * 13 % 11 === 0 ? 2 : 0));
    d += 'M' + (x + 0.5) + ' 34V' + (34 - h);
  }
  document.getElementById('loadbars').setAttribute('d', d);
</script>
</body>
</html>
